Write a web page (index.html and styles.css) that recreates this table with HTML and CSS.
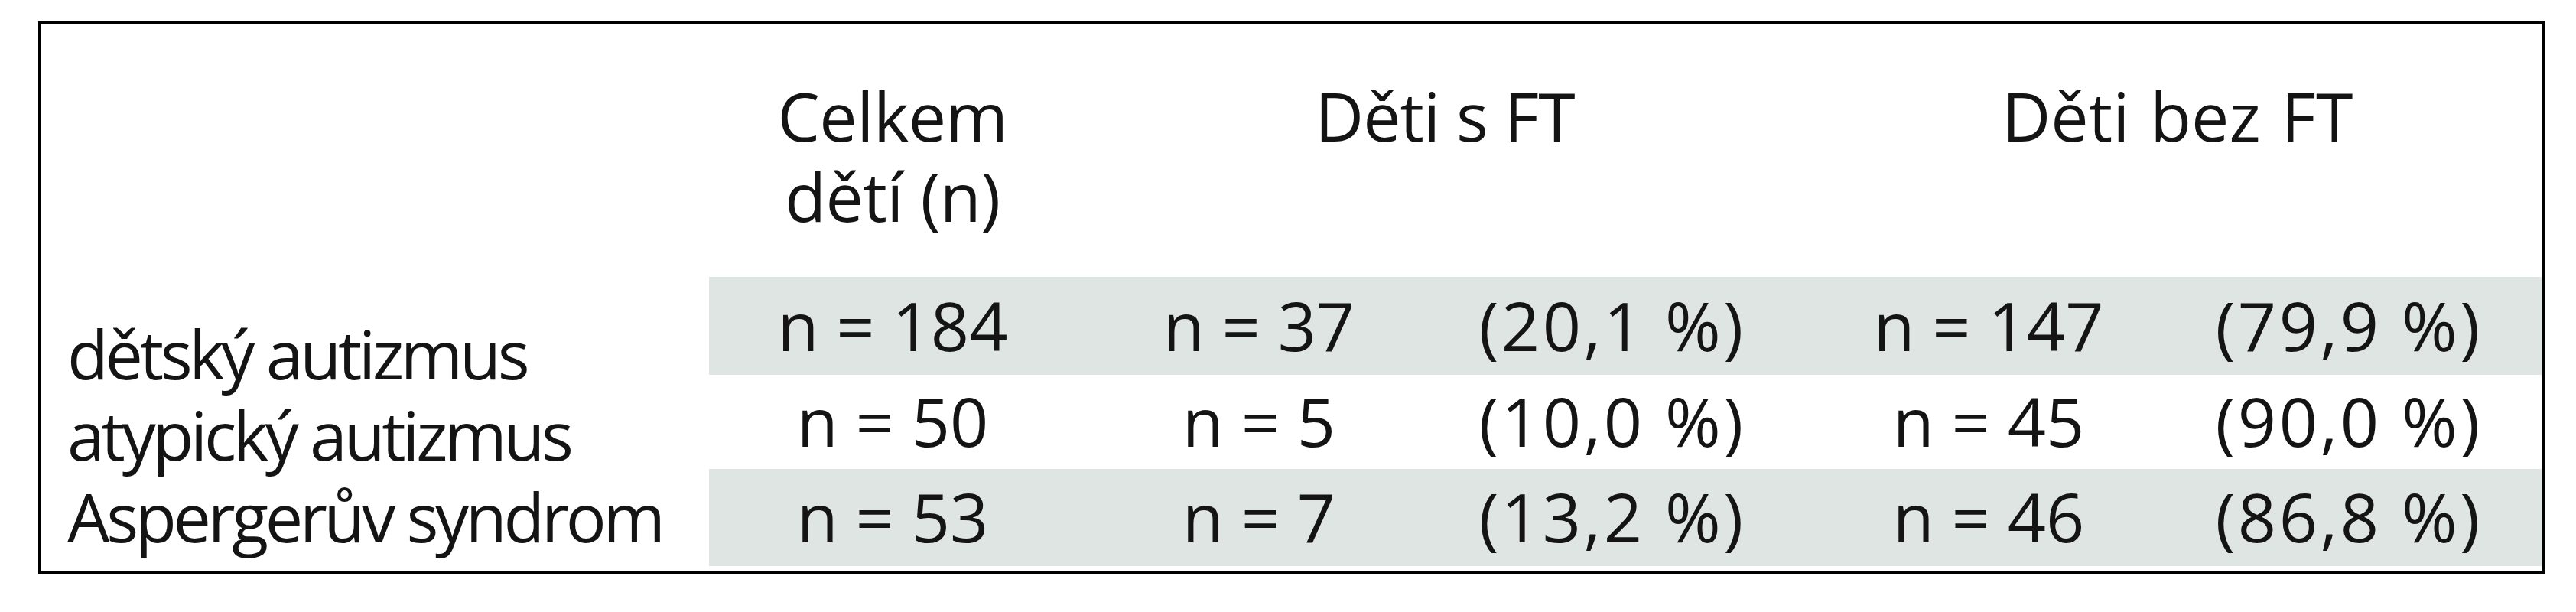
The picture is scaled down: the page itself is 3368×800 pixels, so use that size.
FILE: index.html
```html
<!DOCTYPE html>
<html lang="cs">
<head>
<meta charset="utf-8">
<title>Tabulka</title>
<link rel="stylesheet" href="styles.css">
</head>
<body>
<div class="table">
  <div class="head col-total">Celkem<br>dětí (n)</div>
  <div class="head col-with">Děti s FT</div>
  <div class="head col-without">Děti bez FT</div>

  <div class="labels">
    <span>dětský autizmus</span>
    <span>atypický autizmus</span>
    <span>Aspergerův syndrom</span>
  </div>

  <div class="cell shade">n = 184</div>
  <div class="cell shade">n = 37</div>
  <div class="cell shade pct">(20,1 %)</div>
  <div class="cell shade">n = 147</div>
  <div class="cell shade pct end">(79,9 %)</div>

  <div class="cell">n = 50</div>
  <div class="cell">n = 5</div>
  <div class="cell pct">(10,0 %)</div>
  <div class="cell">n = 45</div>
  <div class="cell pct end">(90,0 %)</div>

  <div class="cell shade">n = 53</div>
  <div class="cell shade">n = 7</div>
  <div class="cell shade pct">(13,2 %)</div>
  <div class="cell shade">n = 46</div>
  <div class="cell shade pct end">(86,8 %)</div>
</div>
</body>
</html>
```

FILE: styles.css
```css
html, body {
  margin: 0;
  padding: 0;
  background: #ffffff;
}

body {
  padding: 27px 0 0 50px;
  font-family: "Open Sans", "Noto Sans", sans-serif;
  font-size: 88px;
  color: #141414;
}

.table {
  box-sizing: border-box;
  width: 3277px;
  border: 4px solid #000000;
  padding-bottom: 6px;
  display: grid;
  grid-template-columns: 873px 480px 478px 446px 538px 1fr;
  grid-template-rows: 331px 128px 123px 127px;
}

.head {
  padding-top: 68px;
  line-height: 105px;
  text-align: center;
  white-space: nowrap;
}

.col-total {
  grid-column: 2;
  letter-spacing: -0.5px;
}

.col-with {
  grid-column: 3 / span 2;
  padding-left: 40px;
  letter-spacing: -1px;
}

.col-without {
  grid-column: 5 / span 2;
  padding-left: 40px;
  word-spacing: 4px;
}

.labels {
  grid-column: 1;
  grid-row: 2 / span 3;
  display: flex;
  flex-direction: column;
  justify-content: flex-end;
  padding: 0 0 12px 34px;
  line-height: 106.5px;
  letter-spacing: -4.3px;
  white-space: nowrap;
}

.cell {
  display: flex;
  align-items: center;
  justify-content: center;
  line-height: 100px;
  padding-bottom: 3px;
  white-space: nowrap;
}

.cell.pct {
  letter-spacing: 3.5px;
}

.cell.end {
  padding-right: 50px;
}

.shade {
  background: #dee5e3;
}
```
